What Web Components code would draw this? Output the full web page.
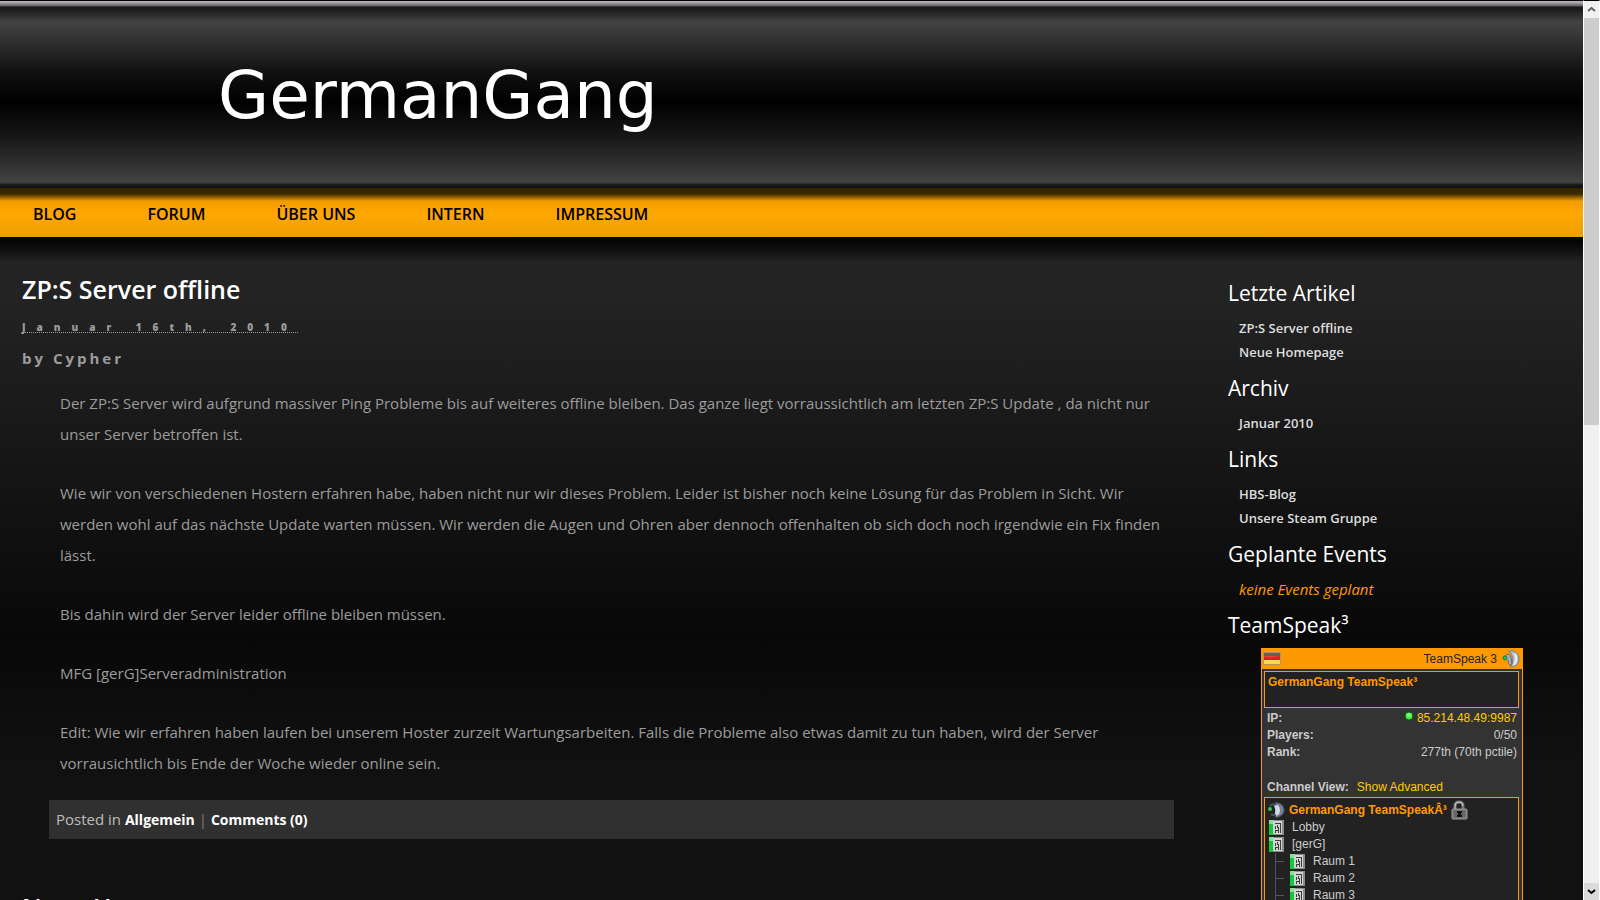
<!DOCTYPE html>
<html lang="de">
<head>
<meta charset="utf-8">
<title>GermanGang</title>
<style>
    html, body {
        height: 100%;
        margin: 0;
    }

    body {
        display: flex;
        overflow: hidden;
        background-color: #111111;
        color: #9c9c9c;
        font-family: "Trebuchet MS", "Open Sans", sans-serif;
        font-size: 15px;
    }
</style>
</head>
<body>
    <page-frame>
        <site-header slot="header" name="GermanGang"></site-header>
        <site-nav slot="header">
            <nav-item href="#blog">BLOG</nav-item>
            <nav-item href="#forum">FORUM</nav-item>
            <nav-item href="#ueber-uns">ÜBER UNS</nav-item>
            <nav-item href="#intern">INTERN</nav-item>
            <nav-item href="#impressum">IMPRESSUM</nav-item>
        </site-nav>

        <blog-post heading="ZP:S Server offline" date="Januar 16th, 2010" author="Cypher" category="Allgemein" comments="0">
            <p>Der ZP:S Server wird aufgrund massiver Ping Probleme bis auf weiteres offline bleiben. Das ganze liegt vorraussichtlich am letzten ZP:S Update , da nicht nur unser Server betroffen ist.</p>
            <p>Wie wir von verschiedenen Hostern erfahren habe, haben nicht nur wir dieses Problem. Leider ist bisher noch keine Lösung für das Problem in Sicht. Wir werden wohl auf das nächste Update warten müssen. Wir werden die Augen und Ohren aber dennoch offenhalten ob sich doch noch irgendwie ein Fix finden lässt.</p>
            <p>Bis dahin wird der Server leider offline bleiben müssen.</p>
            <p>MFG [gerG]Serveradministration</p>
            <p>Edit: Wie wir erfahren haben laufen bei unserem Hoster zurzeit Wartungsarbeiten. Falls die Probleme also etwas damit zu tun haben, wird der Server vorrausichtlich bis Ende der Woche wieder online sein.</p>
        </blog-post>
        <blog-post heading="Neue Homepage"></blog-post>

        <side-section slot="sidebar" heading="Letzte Artikel">
            <side-link href="#zps">ZP:S Server offline</side-link>
            <side-link href="#homepage">Neue Homepage</side-link>
        </side-section>
        <side-section slot="sidebar" heading="Archiv">
            <side-link href="#2010-01">Januar 2010</side-link>
        </side-section>
        <side-section slot="sidebar" heading="Links">
            <side-link href="#hbs">HBS-Blog</side-link>
            <side-link href="#steam">Unsere Steam Gruppe</side-link>
        </side-section>
        <side-section slot="sidebar" heading="Geplante Events">
            <side-note>keine Events geplant</side-note>
        </side-section>
        <side-section slot="sidebar" heading="TeamSpeak³"></side-section>
        <teamspeak-viewer slot="sidebar">
            <teamspeak-channel>Lobby</teamspeak-channel>
            <teamspeak-channel>[gerG]</teamspeak-channel>
            <teamspeak-channel nested>Raum 1</teamspeak-channel>
            <teamspeak-channel nested>Raum 2</teamspeak-channel>
            <teamspeak-channel nested>Raum 3</teamspeak-channel>
        </teamspeak-viewer>
    </page-frame>
    <scroll-bar></scroll-bar>

<script>
function attach(element, html) {
    const template = document.createElement("template");
    template.innerHTML = html;
    element.attachShadow({ mode: "open" });
    element.shadowRoot.appendChild(template.content.cloneNode(true));
}

class PageFrame extends HTMLElement {
    constructor() {
        super();
        attach(this, `
            <style>
                :host {
                    display: block;
                    flex: 1;
                    min-width: 0;
                    height: 100%;
                    overflow: hidden;
                }

                .page {
                    display: flex;
                    align-items: flex-start;
                    background: linear-gradient(#000000, #10100f 13px, #242424 26px, #232323 60px, #080808 400px, #111111 530px);
                }

                main {
                    flex: 1;
                    min-width: 0;
                    padding: 34px 54px 0 22px;
                }

                aside {
                    width: 355px;
                    padding-top: 32px;
                }
            </style>
            <slot name="header"></slot>
            <div class="page">
                <main><slot></slot></main>
                <aside><slot name="sidebar"></slot></aside>
            </div>
        `);
    }
}

class SiteHeader extends HTMLElement {
    constructor() {
        super();
        attach(this, `
            <style>
                :host {
                    display: block;
                    height: 188px;
                    background: linear-gradient(
                        #000000 1px, #bdb5bd 1px, #a39da3 3px, #5b5b5b 6px, #181818 7px, #1c1c1c 10px,
                        #434343 22px, #3c3c3c 30px, #272727 50px, #111111 72px, #000000 102px,
                        #141414 133px, #2c2c2c 160px, #434343 182px, #161616 185px, #101010 188px);
                }

                h1 {
                    margin: 0;
                    padding: 58px 0 0 218px;
                    font: 400 66px/76px "Century Gothic", "DejaVu Sans", sans-serif;
                }

                a {
                    color: #ffffff;
                    text-decoration: none;
                }
            </style>
            <h1><a href="#"></a></h1>
        `);
        this.shadowRoot.querySelector("a").innerText = this.getAttribute("name");
    }
}

class SiteNav extends HTMLElement {
    constructor() {
        super();
        attach(this, `
            <style>
                :host {
                    display: block;
                    background: linear-gradient(#332200, #3c2a00 6px, #a46c00 10px, #f39c00 13px, #ffa700 25px, #eca000 49px);
                }

                nav {
                    display: flex;
                    gap: 71px;
                    height: 49px;
                    padding: 0 33px;
                    align-items: center;
                }
            </style>
            <nav><slot></slot></nav>
        `);
    }
}

class NavItem extends HTMLElement {
    constructor() {
        super();
        attach(this, `
            <style>
                :host {
                    display: block;
                    padding-top: 2px;
                }

                a {
                    color: #000000;
                    font-size: 16px;
                    font-weight: 600;
                    text-decoration: none;
                }
            </style>
            <a><slot></slot></a>
        `);
        this.shadowRoot.querySelector("a").href = this.getAttribute("href");
    }
}

class BlogPost extends HTMLElement {
    constructor() {
        super();
        attach(this, `
            <style>
                :host {
                    display: block;
                    margin-bottom: 50px;
                }

                h2 {
                    margin: 0;
                    color: #ffffff;
                    font-size: 25px;
                    font-weight: 600;
                    line-height: 36px;
                }

                .date {
                    margin-top: 8px;
                    font-size: 10px;
                    font-weight: 800;
                    line-height: 24px;
                }

                abbr {
                    border-bottom: 1px dotted #9c9c9c;
                    letter-spacing: 11px;
                    line-height: 10px;
                    display: inline-block;
                }

                .author {
                    font-size: 15px;
                    font-weight: 700;
                    letter-spacing: 3px;
                    line-height: 38px;
                }

                .text {
                    display: flex;
                    flex-direction: column;
                    gap: 28px;
                    margin: 11px 14px 21px 38px;
                }

                ::slotted(p) {
                    margin: 0;
                    line-height: 31px;
                }

                .meta {
                    margin-left: 27px;
                    padding: 0 7px;
                    background-color: #303030;
                    color: #bdbdbd;
                    line-height: 38px;
                }

                .meta a {
                    color: #ffffff;
                    font-size: 14px;
                    font-weight: 700;
                    text-decoration: none;
                }

                .bar {
                    color: #8c7c6c;
                }
            </style>
            <article>
                <h2></h2>
                <div class="details">
                    <div class="date"><abbr></abbr></div>
                    <div class="author">by <span></span></div>
                    <div class="text"><slot></slot></div>
                    <div class="meta">Posted in <a href="#category" class="category"></a> <span class="bar">|</span> <a href="#comments" class="comments"></a></div>
                </div>
            </article>
        `);

        const root = this.shadowRoot;
        root.querySelector("h2").innerText = this.getAttribute("heading");

        if (this.hasAttribute("date")) {
            root.querySelector("abbr").innerText = this.getAttribute("date");
            root.querySelector(".author span").innerText = this.getAttribute("author");
            root.querySelector(".category").innerText = this.getAttribute("category");
            root.querySelector(".comments").innerText = `Comments (${this.getAttribute("comments")})`;
        } else {
            root.querySelector(".details").remove();
        }
    }
}

class SideSection extends HTMLElement {
    constructor() {
        super();
        attach(this, `
            <style>
                :host {
                    display: block;
                    margin-top: 6px;
                }

                h3 {
                    margin: 0 0 5px;
                    color: #ffffff;
                    font-size: 21px;
                    font-weight: 400;
                    line-height: 36px;
                }

                div {
                    padding-left: 11px;
                }
            </style>
            <h3></h3>
            <div><slot></slot></div>
        `);
        this.shadowRoot.querySelector("h3").innerText = this.getAttribute("heading");
    }
}

class SideLink extends HTMLElement {
    constructor() {
        super();
        attach(this, `
            <style>
                :host {
                    display: block;
                    font-size: 13px;
                    font-weight: 600;
                    line-height: 24px;
                }

                a {
                    color: #dddddd;
                    text-decoration: none;
                }
            </style>
            <a><slot></slot></a>
        `);
        this.shadowRoot.querySelector("a").href = this.getAttribute("href");
    }
}

class SideNote extends HTMLElement {
    constructor() {
        super();
        attach(this, `
            <style>
                :host {
                    display: block;
                    color: #ff9900;
                    font-size: 15px;
                    font-style: italic;
                    line-height: 24px;
                }
            </style>
            <slot></slot>
        `);
    }
}

class TeamspeakViewer extends HTMLElement {
    constructor() {
        super();
        attach(this, `
            <style>
                :host {
                    display: block;
                    margin: 0 60px 0 33px;
                    border: 1px solid #ff9900;
                    background-color: #333333;
                    color: #cccccc;
                    font: 12px/17px Arial, "Liberation Sans", sans-serif;
                }

                svg {
                    flex: none;
                    display: block;
                }

                header {
                    display: flex;
                    align-items: center;
                    gap: 5px;
                    height: 20px;
                    padding: 0 2px 0 1px;
                    background-color: #ff9900;
                    color: #222222;
                }

                header span {
                    flex: 1;
                    text-align: right;
                }

                .box {
                    margin: 2px 3px 0 2px;
                    border: 1px solid #ff9900;
                    background-color: #222222;
                }

                .name {
                    min-height: 33px;
                    padding: 2px 3px 0;
                    color: #ff9900;
                    font-weight: 700;
                }

                table {
                    width: 100%;
                    border-collapse: collapse;
                    margin-top: 2px;
                }

                th, td {
                    padding: 0 5px;
                    text-align: left;
                }

                td {
                    text-align: right;
                }

                td svg {
                    display: inline-block;
                }

                a {
                    color: #ffcc00;
                    text-decoration: none;
                }

                .view {
                    display: flex;
                    gap: 8px;
                    padding: 18px 5px 0;
                }

                .channels {
                    margin-top: 1px;
                    padding: 3px 3px 1px;
                }

                .server {
                    display: flex;
                    align-items: center;
                    gap: 4px;
                    height: 18px;
                    color: #ff9900;
                    font-weight: 700;
                }
            </style>
            <header>
                <svg width="18" height="14" viewBox="0 0 18 14">
                    <rect width="18" height="13" fill="#b09468"/>
                    <rect x="1" y="1" width="16" height="3" fill="#4c4444"/>
                    <rect x="1" y="4" width="16" height="4" fill="#e41c1c"/>
                    <rect x="1" y="8" width="16" height="4" fill="#ffd84c"/>
                    <path d="M1 1H17V4Q9 7 1 5Z" fill="#ffffff" opacity=".15"/>
                </svg>
                <span>TeamSpeak 3</span>
                <svg width="18" height="18" viewBox="0 0 18 18">
                    <path d="M7 1C13 0 17 4 17 9S13 17 8 17C12 14 12 6 7 1Z" fill="#b9c4d6" stroke="#777c86"/>
                    <path d="M13 4Q16 9 12 15" fill="none" stroke="#eef2f8" stroke-width="2"/>
                    <path d="M2 7Q7 1 9 8T8 15Q6 14 6 10" fill="#9fb0c8" stroke="#66686f"/>
                    <circle cx="3" cy="8" r="2" fill="#22cc44" stroke="#207840"/>
                </svg>
            </header>
            <div class="box name">GermanGang TeamSpeak³</div>
            <table>
                <tr>
                    <th>IP:</th>
                    <td>
                        <svg width="10" height="12" viewBox="0 0 10 12"><circle cx="5" cy="6" r="4" fill="#44ee44" stroke="#0b5a0b"/><circle cx="5" cy="5" r="2" fill="#80ff70"/></svg>
                        <a href="ts3server://85.214.48.49:9987">85.214.48.49:9987</a>
                    </td>
                </tr>
                <tr><th>Players:</th><td>0/50</td></tr>
                <tr><th>Rank:</th><td>277th (70th pctile)</td></tr>
            </table>
            <div class="view"><b>Channel View:</b><a href="#advanced">Show Advanced</a></div>
            <div class="box channels">
                <div class="server">
                    <svg width="17" height="17" viewBox="0 0 17 17">
                        <path d="M7 1C12 0 16 4 16 8S12 16 7 15C11 12 11 5 7 1Z" fill="#78808e" stroke="#4e5561"/>
                        <path d="M5 2Q12 2 12 8T6 14Q9 8 5 2Z" fill="#cdd8e8"/>
                        <path d="M2 4Q5 1 8 3M3 12Q5 14 8 13" fill="none" stroke="#46505e" stroke-width="2"/>
                        <circle cx="2" cy="7" r="2" fill="#30c854"/>
                    </svg>
                    <span>GermanGang TeamSpeakÂ³</span>
                    <svg width="17" height="20" viewBox="0 0 17 20">
                        <path d="M4 10V6Q4 2 8 2T12 6V10" fill="none" stroke="#777777" stroke-width="3"/>
                        <path d="M4 9V6Q4 2 8 2T12 6" fill="none" stroke="#cccccc"/>
                        <rect x="1" y="9" width="15" height="10" rx="1" fill="#777777" stroke="#999999"/>
                        <path d="M3 12H14M3 14H14M3 16H14" stroke="#555555"/>
                        <path d="M6 11H11V13H10V15H11V17H6V15H7V13H6Z" fill="#111111"/>
                    </svg>
                </div>
                <slot></slot>
            </div>
        `);
    }
}

class TeamspeakChannel extends HTMLElement {
    constructor() {
        super();
        attach(this, `
            <style>
                :host {
                    display: flex;
                    align-items: center;
                    height: 17px;
                }

                .icon {
                    flex: none;
                    margin: 0 8px 0 1px;
                }

                .branch {
                    display: none;
                    flex: none;
                    width: 15px;
                    height: 17px;
                    margin-left: 7px;
                }

                :host([nested]) .branch {
                    display: block;
                }

                :host([nested]) .icon {
                    margin-left: 0;
                }
            </style>
            <svg class="branch" viewBox="0 0 15 17"><path d="M0.5 0V17M0 8.5H9" stroke="#555555" fill="none"/></svg>
            <svg class="icon" width="15" height="15" viewBox="0 0 15 15">
                <rect width="15" height="15" fill="#8c8c8c"/>
                <rect width="5" height="15" fill="#14c83c"/>
                <rect width="5" height="4" fill="#88dca0"/>
                <rect x="4" y="1" width="9" height="13" fill="#d4d4d4"/>
                <path d="M6 3.500H12M6.500 6V9M8.500 5V8M11.500 3V13M6 10.500H10M6.500 10V13M9.500 7V13" stroke="#3c3c3c" fill="none"/>
            </svg>
            <span><slot></slot></span>
        `);
    }
}

class ScrollBar extends HTMLElement {
    constructor() {
        super();
        attach(this, `
            <style>
                :host {
                    display: flex;
                    flex-direction: column;
                    box-sizing: border-box;
                    width: 17px;
                    height: 100%;
                    border-top: 1px solid #000000;
                    border-left: 1px solid #ffffff;
                    border-right: 1px solid #ffffff;
                    background-color: #f0f0f0;
                }

                button {
                    display: flex;
                    align-items: center;
                    justify-content: center;
                    height: 17px;
                    padding: 0;
                    border: none;
                    background-color: #f0f0f0;
                    color: #606060;
                }

                .down {
                    background-color: #dadada;
                    color: #000000;
                }

                .track {
                    flex: 1;
                }

                .thumb {
                    height: 47%;
                    background-color: #cdcdcd;
                }
            </style>
            <button type="button" aria-label="Nach oben"><svg width="9" height="7" viewBox="0 0 9 7"><path d="M1 5L4.500 2L8 5" fill="none" stroke="currentColor" stroke-width="2"/></svg></button>
            <div class="track"><div class="thumb"></div></div>
            <button type="button" class="down" aria-label="Nach unten"><svg width="9" height="7" viewBox="0 0 9 7"><path d="M1 2L4.500 5L8 2" fill="none" stroke="currentColor" stroke-width="2"/></svg></button>
        `);
    }
}

window.customElements.define("page-frame", PageFrame);
window.customElements.define("site-header", SiteHeader);
window.customElements.define("site-nav", SiteNav);
window.customElements.define("nav-item", NavItem);
window.customElements.define("blog-post", BlogPost);
window.customElements.define("side-section", SideSection);
window.customElements.define("side-link", SideLink);
window.customElements.define("side-note", SideNote);
window.customElements.define("teamspeak-viewer", TeamspeakViewer);
window.customElements.define("teamspeak-channel", TeamspeakChannel);
window.customElements.define("scroll-bar", ScrollBar);
</script>
</body>
</html>
